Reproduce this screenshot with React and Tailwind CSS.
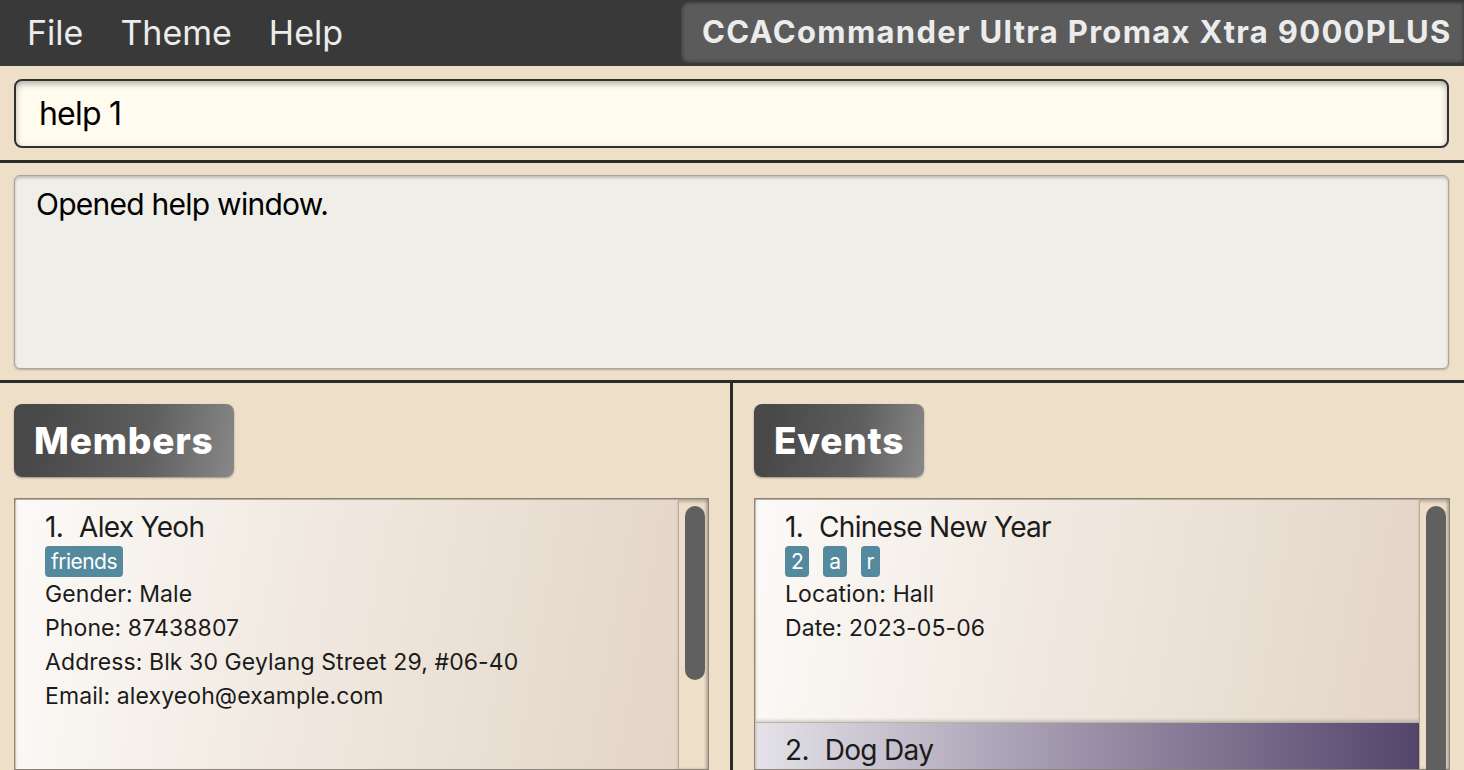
const font = { fontFamily: "Inter, 'Noto Sans', sans-serif" };

function Tag({ label }) {
  return (
    <span className="inline-flex h-[31px] items-center rounded-[4px] bg-[#538a9d] px-[6px] text-[21px] leading-none tracking-tight text-white">
      {label}
    </span>
  );
}

function Card({ index, name, tags, lines, className, height }) {
  return (
    <div
      className={`border-b border-[#bdb2a4] pl-[29px] pt-[10px] shadow-[inset_0_-2px_3px_rgba(0,0,0,0.15)] ${className} ${height}`}
    >
      <div className="text-[28px] leading-[34px] tracking-tight text-[#1b1b1b]">
        {index}.<span className="ml-[16px]">{name}</span>
      </div>
      <div className="mt-[2px] flex gap-[14px]">
        {tags.map((t) => (
          <Tag key={t} label={t} />
        ))}
      </div>
      {lines.map((l) => (
        <div key={l} className="text-[23px] leading-[34px] tracking-[0.1px] text-[#1b1b1b]">
          {l}
        </div>
      ))}
    </div>
  );
}

function ListBox({ children, thumb }) {
  return (
    <div className="flex min-h-0 flex-1 border border-[#8c8478] shadow-[inset_0_2px_4px_rgba(0,0,0,0.3)]">
      <div className="flex min-w-0 flex-1 flex-col overflow-hidden pl-[1px] pt-[1px]">
        {children}
      </div>
      <div className="w-[30px] shrink-0 border-l border-[#b7ab9b] pl-[6px] pt-[7px] shadow-[inset_-2px_0_3px_rgba(0,0,0,0.15)]">
        <div className={`w-[20px] rounded-full bg-[#606060] ${thumb}`} />
      </div>
    </div>
  );
}

function Heading({ children }) {
  return (
    <div className="self-start rounded-lg bg-[linear-gradient(100deg,#484848_10%,#5e5e5e_60%,#888_100%)] px-[20px] shadow-[0_1px_2px_rgba(0,0,0,0.35)]">
      <div className="h-[73px] text-[37px] font-extrabold leading-[73px] tracking-[0.8px] text-white">
        {children}
      </div>
    </div>
  );
}

export default function App() {
  return (
    <div
      className="flex h-screen w-full flex-col overflow-hidden bg-[#eedfc9]"
      style={font}
    >
      <div className="flex h-[66px] shrink-0 bg-[#393939] pb-[3px] pt-[2px]">
        <div className="flex items-center gap-[37px] pl-[27px] text-[34px] text-[#ececec]">
          <span>File</span>
          <span>Theme</span>
          <span>Help</span>
        </div>
        <div className="ml-auto flex w-[783px] items-center rounded-l-lg bg-[#5b5b5b] pl-[21px] shadow-[inset_0_0_4px_rgba(0,0,0,0.5)]">
          <span className="whitespace-nowrap text-[31px] font-bold tracking-[1.3px] text-[#ececec]">
            CCACommander Ultra Promax Xtra 9000PLUS
          </span>
        </div>
      </div>

      <div className="shrink-0 pb-[12px] pl-[14px] pr-[15px] pt-[13px]">
        <div className="flex h-[69px] items-center rounded-lg border-2 border-[#303030] bg-[#fffcef] pl-[23px] shadow-[inset_0_3px_6px_rgba(0,0,0,0.3)]">
          <span className="text-[32px] tracking-tight text-black">help 1</span>
        </div>
      </div>
      <div className="h-[3px] shrink-0 bg-[#2b2b2b]" />

      <div className="shrink-0 pb-[11px] pl-[14px] pr-[15px] pt-[12px]">
        <div className="h-[194px] rounded-md border border-[#a9a69f] bg-[#efeee8] pl-[21px] pt-[6px] shadow-[inset_0_2px_3px_rgba(0,0,0,0.2),0_1px_2px_rgba(0,0,0,0.25)]">
          <span className="text-[30px] tracking-tight text-black">
            Opened help window.
          </span>
        </div>
      </div>
      <div className="h-[3px] shrink-0 bg-[#2b2b2b]" />

      <div className="flex min-h-0 flex-1">
        <div className="flex w-[730px] shrink-0 flex-col gap-[21px] pl-[14px] pr-[21px] pt-[21px]">
          <Heading>Members</Heading>
          <ListBox thumb="h-[174px]">
            <Card
              index={1}
              name="Alex Yeoh"
              tags={["friends"]}
              lines={[
                "Gender: Male",
                "Phone: 87438807",
                "Address: Blk 30 Geylang Street 29, #06-40",
                "Email: alexyeoh@example.com",
              ]}
              height="h-[290px] shrink-0"
              className="bg-[linear-gradient(100deg,#fcfaf8_0%,#f0e8df_45%,#e3d5c7_100%)]"
            />
          </ListBox>
        </div>
        <div className="w-[3px] shrink-0 bg-[#2b2b2b]" />
        <div className="flex min-w-0 flex-1 flex-col gap-[21px] pl-[21px] pr-[14px] pt-[21px]">
          <Heading>Events</Heading>
          <ListBox thumb="h-[400px]">
            <Card
              index={1}
              name="Chinese New Year"
              tags={["2", "a", "r"]}
              lines={["Location: Hall", "Date: 2023-05-06"]}
              height="h-[223px] shrink-0"
              className="bg-[linear-gradient(100deg,#fcfaf8_0%,#f0e8df_45%,#e3d5c7_100%)]"
            />
            <Card
              index={2}
              name="Dog Day"
              tags={[]}
              lines={[]}
              height="h-[223px] shrink-0"
              className="bg-[linear-gradient(90deg,#e4e2e8_0%,#a8a0b4_40%,#54456c_100%)]"
            />
          </ListBox>
        </div>
      </div>
    </div>
  );
}
